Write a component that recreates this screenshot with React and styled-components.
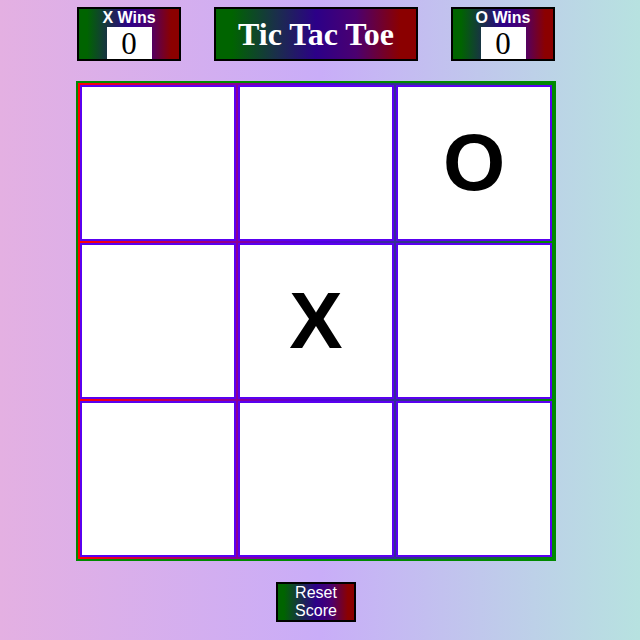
import React, { useState } from "react";
import styled, { createGlobalStyle } from "styled-components";

const GlobalStyle = createGlobalStyle`
  html, body {
    margin: 0;
    padding: 0;
  }
  body {
    width: 640px;
    height: 640px;
    overflow: hidden;
    background: linear-gradient(to right, #e4b0e2, #c9adf8 50%, #b7e2e0);
    font-family: "Liberation Sans", Arial, sans-serif;
  }
`;

const fancy = `linear-gradient(to right, #006400 8%, #1a2f4a 30%, #2c0088 50%, #4b0070 70%, #8b0000 92%)`;

const Page = styled.div`
  width: 632px;
  padding-top: 7px;
  display: flex;
  flex-direction: column;
  align-items: center;
`;

const Header = styled.div`
  display: flex;
  gap: 33px;
  align-items: flex-start;
`;

const ScoreBox = styled.div`
  width: 100px;
  height: 50px;
  border: 2px solid #000;
  background: ${fancy};
  display: flex;
  flex-direction: column;
  align-items: center;
`;

const ScoreLabel = styled.div`
  color: #fff;
  font-weight: bold;
  font-size: 16px;
  line-height: 18px;
`;

const ScoreValue = styled.div`
  width: 45px;
  height: 32px;
  background: #fff;
  color: #000;
  font-family: "Liberation Serif", "Times New Roman", serif;
  font-size: 31px;
  line-height: 34px;
  text-align: center;
`;

const Title = styled.h1`
  margin: 0;
  width: 200px;
  height: 50px;
  border: 2px solid #000;
  background: ${fancy};
  color: #fff;
  font-family: "Liberation Serif", "Times New Roman", serif;
  font-size: 32px;
  font-weight: bold;
  line-height: 50px;
  text-align: center;
`;

const Board = styled.div`
  margin-top: 20px;
  border: 2px solid #008a00;
  padding: 2px;
  display: grid;
  grid-template-columns: repeat(3, 156px);
  grid-template-rows: repeat(3, 156px);
  gap: 2px;
  background: linear-gradient(to right, #ff0000, #5000e0 50%, #008a00);
`;

const Cell = styled.button`
  box-sizing: border-box;
  width: 156px;
  height: 156px;
  margin: 0;
  padding: 0;
  border: 2px solid #5a00f0;
  background: #fff;
  color: #000;
  font-family: "Liberation Sans", Arial, sans-serif;
  font-size: 80px;
  font-weight: bold;
  display: flex;
  align-items: center;
  justify-content: center;
  cursor: pointer;
`;

const ResetButton = styled.button`
  margin-top: 21px;
  box-sizing: border-box;
  width: 80px;
  height: 40px;
  padding: 0 10px;
  border: 2px solid #000;
  background: ${fancy};
  color: #fff;
  font-family: "Liberation Sans", Arial, sans-serif;
  font-size: 16px;
  line-height: 18px;
  cursor: pointer;
`;

export default function App() {
  const [cells] = useState(["", "", "O", "", "X", "", "", "", ""]);
  const [score, setScore] = useState({ x: 0, o: 0 });

  return (
    <>
      <GlobalStyle />
      <Page>
        <Header>
          <ScoreBox>
            <ScoreLabel>X Wins</ScoreLabel>
            <ScoreValue>{score.x}</ScoreValue>
          </ScoreBox>
          <Title>Tic Tac Toe</Title>
          <ScoreBox>
            <ScoreLabel>O Wins</ScoreLabel>
            <ScoreValue>{score.o}</ScoreValue>
          </ScoreBox>
        </Header>
        <Board>
          {cells.map((c, i) => (
            <Cell key={i}>{c}</Cell>
          ))}
        </Board>
        <ResetButton onClick={() => setScore({ x: 0, o: 0 })}>Reset Score</ResetButton>
      </Page>
    </>
  );
}
